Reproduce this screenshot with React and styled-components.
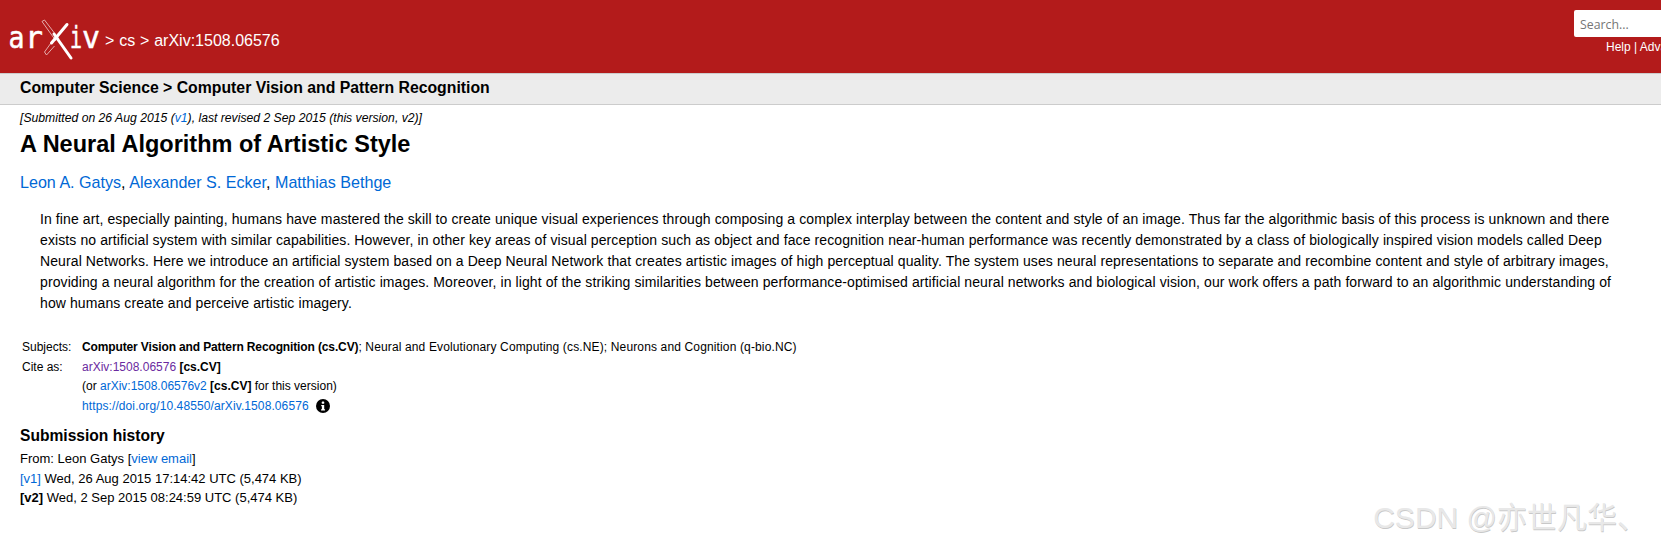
import styled, { createGlobalStyle } from "styled-components";

const GlobalStyle = createGlobalStyle`
  html, body {
    margin: 0;
    padding: 0;
    background: #fff;
  }
  body {
    font-family: "Liberation Sans", Arial, sans-serif;
    color: #000;
    overflow: hidden;
  }
`;

const Page = styled.div`
  position: relative;
  width: 1661px;
  height: 548px;
  overflow: hidden;
`;

const Header = styled.header`
  display: flex;
  justify-content: space-between;
  height: 73px;
  background: #b31b1b;
  color: #fff;
`;

const Crumbs = styled.div`
  display: flex;
  align-items: center;
  gap: 1px;
  font-size: 16px;
  word-spacing: 0.4px;
  span {
    padding-top: 9px;
  }
`;

const SearchBlock = styled.div`
  width: 87px;
  padding-top: 10px;
  flex: none;
  overflow: hidden;
`;

const SearchInput = styled.div`
  width: 100px;
  height: 27px;
  box-sizing: border-box;
  padding: 8px 6px;
  background: #fff;
  border-radius: 2px;
  color: #757575;
  font-family: "Open Sans", sans-serif;
  font-size: 12.3px;
  line-height: 14px;
`;

const SearchLinks = styled.div`
  padding: 3px 0 0 32px;
  font-size: 12px;
  line-height: 14px;
  white-space: nowrap;
`;

const SubHeader = styled.div`
  height: 32px;
  box-sizing: border-box;
  padding-left: 20px;
  background: #ececec;
  border-top: 1px solid #ccc;
  border-bottom: 1px solid #ccc;
  font-size: 15.8px;
  font-weight: 700;
  line-height: 28px;
`;

const Main = styled.main`
  padding: 6px 20px 0;
`;

const Dateline = styled.div`
  font-size: 12.2px;
  font-style: italic;
  line-height: 14px;
`;

const A = styled.a`
  color: ${(p) => (p.$visited ? "#6a2aa0" : "#0068d6")};
  letter-spacing: ${(p) => p.$tracking || "inherit"};
  text-decoration: none;
`;

const Title = styled.h1`
  margin: 4px 0 0;
  font-size: 23.5px;
  font-weight: 700;
  line-height: 30px;
`;

const Authors = styled.div`
  margin-top: 13px;
  font-size: 16.1px;
  line-height: 20px;
`;

const Abstract = styled.p`
  margin: 17px 0 0;
  padding: 0 20px;
  font-size: 14px;
  letter-spacing: 0.1px;
  line-height: 20.9px;
`;

const Metatable = styled.div`
  display: grid;
  grid-template-columns: 60px 1fr;
  grid-auto-rows: 19.5px;
  margin: 24.5px 0 0 2px;
  font-size: 12px;
  line-height: 19.5px;
`;

const PrimarySubject = styled.b`
  letter-spacing: -0.13px;
`;

const OtherSubjects = styled.span`
  letter-spacing: 0.14px;
`;

const InfoIcon = styled.svg`
  width: 14px;
  height: 14px;
  margin-left: 7px;
  vertical-align: -3px;
`;

const HistoryTitle = styled.h2`
  margin: 9.5px 0 0;
  font-size: 15.6px;
  font-weight: 700;
  line-height: 20px;
`;

const History = styled.div`
  margin-top: 3.5px;
  font-size: 13px;
  line-height: 19.6px;
`;

const Watermark = styled.div`
  position: absolute;
  right: 14px;
  top: 500px;
  color: #e8e8e8;
  font-family: "Liberation Sans", "Noto Sans CJK SC", sans-serif;
  font-size: 30px;
  line-height: 36px;
  text-shadow: 0.5px 0.5px 0.5px #c8c8c8;
  white-space: nowrap;
`;

const LogoGlyph = ({ x, width, children }) => (
  <text
    x={x}
    y="48"
    fill="#fff"
    stroke="#fff"
    strokeWidth="0.5"
    fontFamily="DejaVu Sans Mono"
    fontSize="30"
    textLength={width}
    lengthAdjust="spacingAndGlyphs"
  >
    {children}
  </text>
);

const Logo = () => (
  <svg width="104" height="73" viewBox="0 0 104 73" aria-label="arXiv">
    <LogoGlyph x="8.5" width="16">a</LogoGlyph>
    <LogoGlyph x="25" width="18">r</LogoGlyph>
    <LogoGlyph x="70" width="12">i</LogoGlyph>
    <LogoGlyph x="82" width="18">v</LogoGlyph>
    <path d="M42 21.5 L44.5 20 L59 39" fill="none" stroke="#e9bcbc" strokeWidth="0.9" />
    <path d="M42 21.5 L56 41" fill="none" stroke="#e9bcbc" strokeWidth="0.9" />
    <path d="M51 43 L44.5 52 L46.5 55 L54.5 46" fill="none" stroke="#e9bcbc" strokeWidth="0.9" />
    <path d="M54 34 L71 58" stroke="#fff" strokeWidth="3" strokeLinecap="round" />
    <path d="M51.5 43 L67 24.5" stroke="#fff" strokeWidth="3" strokeLinecap="round" />
  </svg>
);

export default function App() {
  return (
    <Page>
      <GlobalStyle />
      <Header>
        <Crumbs>
          <Logo />
          <span>&gt; cs &gt; arXiv:1508.06576</span>
        </Crumbs>
        <SearchBlock>
          <SearchInput>Search...</SearchInput>
          <SearchLinks>Help | Advanced Search</SearchLinks>
        </SearchBlock>
      </Header>
      <SubHeader>Computer Science &gt; Computer Vision and Pattern Recognition</SubHeader>
      <Main>
        <Dateline>
          [Submitted on 26 Aug 2015 (<A href="#">v1</A>), last revised 2 Sep 2015 (this version, v2)]
        </Dateline>
        <Title>A Neural Algorithm of Artistic Style</Title>
        <Authors>
          <A href="#">Leon A. Gatys</A>, <A href="#">Alexander S. Ecker</A>, <A href="#">Matthias Bethge</A>
        </Authors>
        <Abstract>
          In fine art, especially painting, humans have mastered the skill to create unique visual experiences through composing a complex interplay between the content and style of an image. Thus far the algorithmic basis of this process is unknown and there exists no artificial system with similar capabilities. However, in other key areas of visual perception such as object and face recognition near-human performance was recently demonstrated by a class of biologically inspired vision models called Deep Neural Networks. Here we introduce an artificial system based on a Deep Neural Network that creates artistic images of high perceptual quality. The system uses neural representations to separate and recombine content and style of arbitrary images, providing a neural algorithm for the creation of artistic images. Moreover, in light of the striking similarities between performance-optimised artificial neural networks and biological vision, our work offers a path forward to an algorithmic understanding of how humans create and perceive artistic imagery.
        </Abstract>
        <Metatable>
          <div>Subjects:</div>
          <div>
            <PrimarySubject>Computer Vision and Pattern Recognition (cs.CV)</PrimarySubject>
            <OtherSubjects>; Neural and Evolutionary Computing (cs.NE); Neurons and Cognition (q-bio.NC)</OtherSubjects>
          </div>
          <div>Cite as:</div>
          <div>
            <A href="#" $visited>arXiv:1508.06576</A> <b>[cs.CV]</b>
          </div>
          <div />
          <div>
            (or <A href="#">arXiv:1508.06576v2</A> <b>[cs.CV]</b> for this version)
          </div>
          <div />
          <div>
            <A href="#" $tracking="0.1px">https://doi.org/10.48550/arXiv.1508.06576</A>
            <InfoIcon viewBox="0 0 15 15">
              <circle cx="7.5" cy="7.5" r="7.5" fill="#000" />
              <rect x="6.2" y="2.8" width="2.6" height="2.4" rx="0.6" fill="#fff" />
              <path d="M5.6 6.3h3.2v4.6h.9v1.4H5.4v-1.4h.9V7.7h-.7z" fill="#fff" />
            </InfoIcon>
          </div>
        </Metatable>
        <HistoryTitle>Submission history</HistoryTitle>
        <History>
          <div>
            From: Leon Gatys [<A href="#">view email</A>]
          </div>
          <div>
            <A href="#">[v1]</A> Wed, 26 Aug 2015 17:14:42 UTC (5,474 KB)
          </div>
          <div>
            <b>[v2]</b> Wed, 2 Sep 2015 08:24:59 UTC (5,474 KB)
          </div>
        </History>
      </Main>
      <Watermark>CSDN @亦世凡华、</Watermark>
    </Page>
  );
}
